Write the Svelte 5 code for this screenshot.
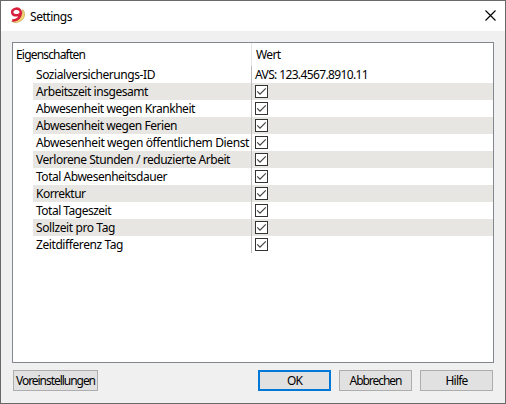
<script>
  const rows = [
    { label: 'Sozialversicherungs-ID', value: 'AVS: 123.4567.8910.11', width: 119 },
    { label: 'Arbeitszeit insgesamt', width: 112 },
    { label: 'Abwesenheit wegen Krankheit', width: 159 },
    { label: 'Abwesenheit wegen Ferien', width: 141 },
    { label: 'Abwesenheit wegen öffentlichem Dienst', width: 213 },
    { label: 'Verlorene Stunden / reduzierte Arbeit', width: 194 },
    { label: 'Total Abwesenheitsdauer', width: 131 },
    { label: 'Korrektur', width: 49.5 },
    { label: 'Total Tageszeit', width: 75 },
    { label: 'Sollzeit pro Tag', width: 79 },
    { label: 'Zeitdifferenz Tag', width: 87 },
  ];

  // Spreads the letters so that the text takes the given width.
  function fit(node, width) {
    const natural = node.getBoundingClientRect().width;
    node.style.letterSpacing = `${(width - natural) / node.textContent.length}px`;
  }
</script>

<div class="window">
  <header>
    <svg class="logo" width="16" height="17" viewBox="0 0 16 17">
      <path d="M12.7 2.5C16.6 7 14.6 14.8 5.2 15.6L1.5 14.5C8 14.4 12.8 10 12.7 2.5Z" fill="#f3d673" stroke="#c9a850" stroke-width=".7" />
      <path d="M10.2 6.2C9.5 8.8 3 9.6 2.2 5.5C1.8 2 7.8.2 10 3.2C12.2 7 9.4 13.5 2.2 13.6" fill="none" stroke="#d81f3c" stroke-width="2.5" />
    </svg>
    <span class="title"><span use:fit={42}>Settings</span></span>
    <svg class="close" width="11" height="11" viewBox="0 0 11 11">
      <path d="M.5 .5L10.5 10.5M10.5 .5L.5 10.5" stroke="#000" stroke-width="1.15" />
    </svg>
  </header>

  <main>
    <div class="table">
      <div class="row head">
        <div class="name"><span use:fit={69}>Eigenschaften</span></div>
        <div class="value"><span use:fit={24.5}>Wert</span></div>
      </div>
      {#each rows as row, i}
        <div class="row" class:shaded={i % 2 === 1}>
          <div class="name"><span use:fit={row.width}>{row.label}</span></div>
          <div class="value">
            {#if row.value}
              <span use:fit={113}>{row.value}</span>
            {:else}
              <svg width="13" height="13" viewBox="0 0 13 13">
                <rect x=".5" y=".5" width="12" height="12" fill="#fff" stroke="#333" />
                <path d="M2.2 6.4L5 9.2L10.8 3.4" fill="none" stroke="#444" stroke-width="1.25" />
              </svg>
            {/if}
          </div>
        </div>
      {/each}
    </div>
    <footer>
      <button class="defaults"><span use:fit={79}>Voreinstellungen</span></button>
      <button class="ok"><span use:fit={15}>OK</span></button>
      <button><span use:fit={52}>Abbrechen</span></button>
      <button><span use:fit={22}>Hilfe</span></button>
    </footer>
  </main>
</div>

<style>
  .window {
    box-sizing: border-box;
    width: 506px;
    height: 404px;
    border: 1px solid #696969;
    background: #f0f0f0;
    color: #000;
    font: 12px/17px "Noto Sans", "Open Sans", sans-serif;
    white-space: nowrap;
    display: flex;
    flex-direction: column;
  }
  span { display: inline-block; }
  svg { display: block; flex: none; }
  header {
    height: 30px;
    background: #fff;
    display: flex;
    align-items: center;
    padding: 0 8px 0 9px;
    flex: none;
  }
  .logo { margin-top: -2px; }
  .title { margin-left: 4px; flex: 1; }
  .close { margin-top: -1px; margin-right: 1px; }
  main {
    flex: 1;
    padding: 11px 11px 0;
  }
  .table {
    box-sizing: border-box;
    width: 482px;
    height: 321px;
    border: 1px solid #828790;
    background: #fff;
  }
  .row {
    display: flex;
    height: 17px;
    margin-left: 20px;
  }
  .name {
    box-sizing: border-box;
    width: 219px;
    padding-left: 3px;
    border-right: 1px solid #bdbdbd;
  }
  .value {
    padding-left: 3px;
    display: flex;
    align-items: center;
  }
  .shaded { background: #e8e6e2; }
  .head {
    height: 23px;
    margin-left: 0;
    line-height: 24px;
  }
  .head .name {
    width: 239px;
    border-color: #e5e5e5;
  }
  .head .value { padding-left: 4px; }
  footer {
    display: flex;
    gap: 8px;
    margin-top: 7px;
    padding-left: 1px;
  }
  button {
    box-sizing: border-box;
    width: 73px;
    height: 21px;
    padding: 0;
    border: 1px solid #adadad;
    background: #e1e1e1;
    color: #000;
    font: 12px/17px "Noto Sans", "Open Sans", sans-serif;
    text-align: center;
  }
  .defaults { width: 85px; margin-right: auto; }
  .ok { border: 2px solid #0078d7; }
  footer { padding-right: 1px; }
</style>
